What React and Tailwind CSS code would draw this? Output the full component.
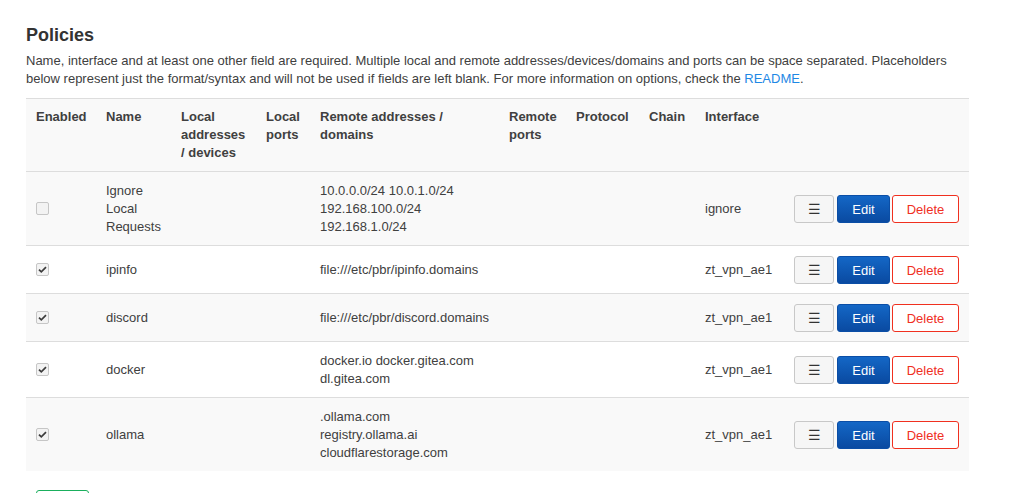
import React from "react";

const font = { fontFamily: '"Liberation Sans", Arial, sans-serif' };

function Check({ checked }) {
  return (
    <span className="relative inline-block w-[13px] h-[13px] border border-[#c6c6c6] rounded-[2px] bg-[#f3f3f3] align-middle">
      {checked && (
        <svg viewBox="0 0 13 13" className="absolute left-[-1px] top-[-1px] w-[13px] h-[13px]">
          <path d="M3 6.6 L5.3 8.9 L10 4.2" fill="none" stroke="#3c3c3c" strokeWidth="1.7" />
        </svg>
      )}
    </span>
  );
}

function Actions() {
  return (
    <div className="flex items-center">
      <button className="w-[40px] h-[28px] border border-[#c8c8c8] rounded-[3px] bg-[#f6f6f6] text-[#333] text-[14px] leading-none flex items-center justify-center">
        ☰
      </button>
      <button className="ml-[3px] w-[53px] h-[28px] rounded-[3px] bg-gradient-to-b from-[#1467c6] to-[#0a4aa1] border border-[#0b4ea6] text-white text-[13px] leading-none">
        Edit
      </button>
      <button className="ml-[2px] w-[67px] h-[28px] rounded-[3px] bg-white border border-[#f0301f] text-[#f0301f] text-[13px] leading-none">
        Delete
      </button>
    </div>
  );
}

const rows = [
  { enabled: false, name: ["Ignore", "Local", "Requests"], remote: ["10.0.0.0/24 10.0.1.0/24", "192.168.100.0/24", "192.168.1.0/24"], iface: "ignore" },
  { enabled: true, name: ["ipinfo"], remote: ["file:///etc/pbr/ipinfo.domains"], iface: "zt_vpn_ae1" },
  { enabled: true, name: ["discord"], remote: ["file:///etc/pbr/discord.domains"], iface: "zt_vpn_ae1" },
  { enabled: true, name: ["docker"], remote: ["docker.io docker.gitea.com", "dl.gitea.com"], iface: "zt_vpn_ae1" },
  { enabled: true, name: ["ollama"], remote: [".ollama.com", "registry.ollama.ai", "cloudflarestorage.com"], iface: "zt_vpn_ae1" },
];

const headers = [
  ["Enabled"],
  ["Name"],
  ["Local", "addresses", "/ devices"],
  ["Local", "ports"],
  ["Remote addresses /", "domains"],
  ["Remote", "ports"],
  ["Protocol"],
  ["Chain"],
  ["Interface"],
  [""],
];

const widths = [70, 75, 85, 54, 189, 67, 73, 56, 89, 185];

export default function App() {
  return (
    <div className="bg-white min-h-[493px] pl-[26px] pt-[24px] text-[#404040]" style={font}>
      <h2 className="text-[18px] leading-[22px] font-bold text-[#333]">Policies</h2>
      <p className="mt-[6px] text-[13px] leading-[18px] w-[943px]">
        Name, interface and at least one other field are required. Multiple local and remote addresses/devices/domains and ports can be space separated. Placeholders below represent just the format/syntax and will not be used if fields are left blank. For more information on options, check the{" "}
        <a className="text-[#1e88e5]">README</a>.
      </p>
      <table className="mt-[10px] w-[943px] table-fixed border-collapse text-[13px] leading-[18px]">
        <colgroup>
          {widths.map((w, i) => (
            <col key={i} style={{ width: w }} />
          ))}
        </colgroup>
        <thead>
          <tr className="bg-[#f9f9f9] border-t border-[#dddddd]">
            {headers.map((h, i) => (
              <th key={i} className="text-left align-top font-bold pl-[10px] pr-[4px] py-[9px]">
                {h.map((l, j) => (
                  <div key={j}>{l}</div>
                ))}
              </th>
            ))}
          </tr>
        </thead>
        <tbody>
          {rows.map((r, i) => (
            <tr key={i} className={`border-t border-[#dddddd] ${i % 2 === 0 ? "bg-[#f9f9f9]" : "bg-white"}`}>
              <td className="align-middle pl-[10px] pt-[10px] pb-[9px]">
                <div className="-mt-[3px]">
                  <Check checked={r.enabled} />
                </div>
              </td>
              <td className="align-middle pl-[10px] pt-[10px] pb-[9px]">
                {r.name.map((l, j) => (
                  <div key={j}>{l}</div>
                ))}
              </td>
              <td className="pt-[10px] pb-[9px]"></td>
              <td className="pt-[10px] pb-[9px]"></td>
              <td className="align-middle pl-[10px] pt-[10px] pb-[9px] whitespace-nowrap">
                {r.remote.map((l, j) => (
                  <div key={j}>{l}</div>
                ))}
              </td>
              <td className="pt-[10px] pb-[9px]"></td>
              <td className="pt-[10px] pb-[9px]"></td>
              <td className="pt-[10px] pb-[9px]"></td>
              <td className="align-middle pl-[10px] pt-[10px] pb-[9px]">{r.iface}</td>
              <td className="align-middle pl-[10px] pt-[10px] pb-[9px]">
                <Actions />
              </td>
            </tr>
          ))}
        </tbody>
      </table>
      <div className="mt-[19px] ml-[10px]">
        <button className="w-[53px] h-[28px] rounded-[3px] border border-[#1aaf5d] text-[#1aaf5d] text-[13px] bg-white">
          Add
        </button>
      </div>
    </div>
  );
}
